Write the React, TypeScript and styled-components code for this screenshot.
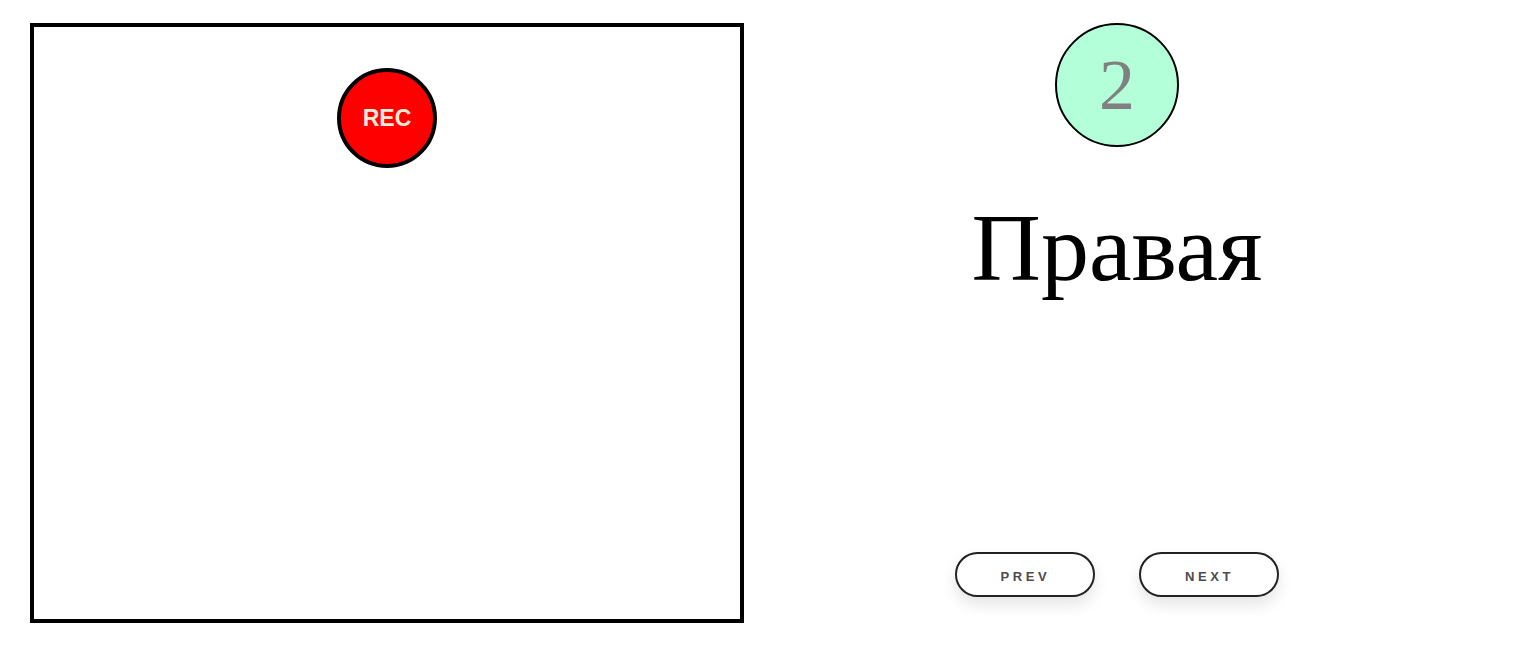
import React from "react";
import styled, { createGlobalStyle } from "styled-components";

const Global = createGlobalStyle`
  html, body { margin: 0; padding: 0; background: #fff; }
  body { font-family: "Liberation Serif", "Times New Roman", serif; }
`;

const Page = styled.div`
  display: flex;
  align-items: flex-start;
  padding: 23px 0 0 30px;
`;

const Camera = styled.div`
  box-sizing: border-box;
  width: 714px;
  height: 600px;
  border: 4px solid #000;
  display: flex;
  justify-content: center;
  align-items: flex-start;
  padding-top: 41px;
`;

const RecButton = styled.button`
  box-sizing: border-box;
  width: 100px;
  height: 100px;
  border-radius: 50%;
  border: 4px solid #000;
  background: #ff0000;
  color: #faebd7;
  font-family: "Liberation Sans", Arial, sans-serif;
  font-weight: 700;
  font-size: 23px;
  padding: 0;
  display: flex;
  align-items: center;
  justify-content: center;
`;

const Side = styled.div`
  width: 746px;
  display: flex;
  flex-direction: column;
  align-items: center;
`;

const Counter = styled.div`
  box-sizing: border-box;
  width: 124px;
  height: 124px;
  border-radius: 50%;
  border: 2px solid #000;
  background: #b3ffd9;
  color: #808080;
  font-size: 72px;
  display: flex;
  align-items: center;
  justify-content: center;
  font-family: "Liberation Serif", "Times New Roman", serif;
`;

const Word = styled.div`
  margin-top: 53px;
  font-size: 96px;
  line-height: 96px;
  color: #000;
  font-family: "Liberation Serif", "Times New Roman", serif;
`;

const Nav = styled.div`
  margin-top: 256px;
  display: flex;
  gap: 44px;
`;

const NavButton = styled.button`
  box-sizing: border-box;
  width: 140px;
  height: 45px;
  border-radius: 45px;
  border: 2px solid #222;
  background: #fff;
  color: #4d4b50;
  font-family: "Liberation Sans", Arial, sans-serif;
  font-size: 13px;
  font-weight: 700;
  letter-spacing: 3.6px;
  text-transform: uppercase;
  box-shadow: 0 8px 15px rgba(0, 0, 0, 0.1);
  padding: 4px 0 0 1px;
`;

export default function App() {
  return (
    <>
      <Global />
      <Page>
        <Camera>
          <RecButton>REC</RecButton>
        </Camera>
        <Side>
          <Counter>2</Counter>
          <Word>Правая</Word>
          <Nav>
            <NavButton>Prev</NavButton>
            <NavButton>Next</NavButton>
          </Nav>
        </Side>
      </Page>
    </>
  );
}
